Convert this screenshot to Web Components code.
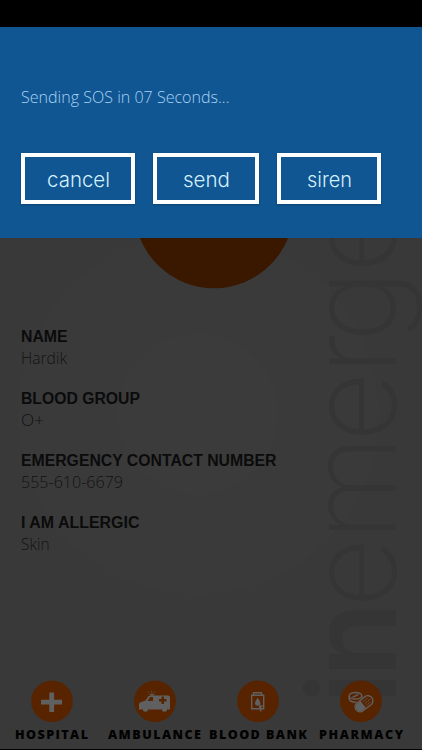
<!DOCTYPE html>
<html lang="en">
<head>
<meta charset="utf-8">
<title>In Emergency</title>
<style>
    html, body { margin: 0; background: #000; }
    body { width: 422px; height: 750px; overflow: hidden; font-family: "Open Sans", "Noto Sans", sans-serif; }
</style>
</head>
<body>
<emergency-app></emergency-app>
<script>
class FitText extends HTMLElement {
    connectedCallback() {
        const w = this.getAttribute('w');
        const h = this.getAttribute('h') || 24;
        const base = this.getAttribute('base') || 18;
        const adjust = this.hasAttribute('spaced') ? 'spacing' : 'spacingAndGlyphs';
        this.attachShadow({ mode: 'open' }).innerHTML = `
            <style>
                :host { display: block; width: ${w}px; height: ${h}px; }
                svg { display: block; overflow: visible; }
                text { fill: currentColor; }
            </style>
            <svg width="${w}" height="${h}"><text x="0" y="${base}" textLength="${w}" lengthAdjust="${adjust}">${this.textContent}</text></svg>`;
    }
}
customElements.define('fit-text', FitText);

class SosButton extends HTMLElement {
    connectedCallback() {
        this.attachShadow({ mode: 'open' }).innerHTML = `
            <style>
                :host { display: flex; box-sizing: border-box; width: ${this.getAttribute('width')}px; height: 51px; border: 4px solid #fff; align-items: center; justify-content: center; color: #d5f0ff; box-shadow: 0 1px 2px rgba(0,0,0,0.25); font: 300 20.5px Inter, "Liberation Sans", sans-serif; cursor: pointer; }
            </style>
            <slot></slot>`;
    }
}
customElements.define('sos-button', SosButton);

class SosPanel extends HTMLElement {
    connectedCallback() {
        this.attachShadow({ mode: 'open' }).innerHTML = `
            <style>
                :host { display: block; position: absolute; left: 0; top: 27px; width: 422px; height: 211px; box-sizing: border-box; padding: 58px 21px 0 21px; background: #105692; }
                .message { height: 68px; color: #a9d2f3; font: 300 17px "Open Sans", "Noto Sans", sans-serif; }
                .buttons { display: flex; gap: 18px; }
            </style>
            <div class="message"><fit-text w="208.5" h="26" base="18">Sending SOS in 07 Seconds...</fit-text></div>
            <div class="buttons">
                <sos-button width="114"><fit-text w="63" h="26" base="20.5">cancel</fit-text></sos-button>
                <sos-button width="106"><fit-text w="47" h="26" base="20.5">send</fit-text></sos-button>
                <sos-button width="104"><fit-text w="45" h="26" base="20.5">siren</fit-text></sos-button>
            </div>`;
    }
}
customElements.define('sos-panel', SosPanel);

class ProfileField extends HTMLElement {
    connectedCallback() {
        this.attachShadow({ mode: 'open' }).innerHTML = `
            <style>
                :host { display: block; height: 62px; }
                .label { color: #0b0b0b; font: bold 16px "Liberation Sans", Arial, sans-serif; }
                .value { color: #121212; font: 300 16.5px "Open Sans", "Noto Sans", sans-serif; }
            </style>
            <div class="label"><fit-text w="${this.getAttribute('lw')}" h="22" base="15">${this.getAttribute('label')}</fit-text></div>
            <div class="value"><fit-text w="${this.getAttribute('vw')}" h="22" base="15">${this.getAttribute('value')}</fit-text></div>`;
    }
}
customElements.define('profile-field', ProfileField);

// 42x42 icons, drawn over the orange disc
const icons = {
    hospital: `<path d="M18.300 12.500h4.800v7.300h8v4.600h-8v7.600h-4.800v-7.600H10v-4.600h8.300z"/>`,
    ambulance: `<path fill-rule="evenodd" d="M18 15.500h16q2 0 2 2v12h-2a4 4 0 0 0-7 0H15a4 4 0 0 0-7 0H5v-5.500l1-1.500 5.500-2 3-4.500zM16 17l-2.500 4H19v-4zM27.500 16.500v2.500H25v2.500h2.500V24H30v-2.500h2.500V19H30v-2.500z"/>
        <circle cx="11.500" cy="29" r="2.800"/><circle cx="30.500" cy="29" r="2.800"/>
        <path d="M16 14.200h4v1h-4zM14 11.500l1.200 1.500M17.800 10.500v2.500M21.300 11.500l-1 1.500" stroke="#606060" stroke-width=".6"/>`,
    blood: `<g fill="none" stroke="#606060" stroke-width="1.400"><path d="M16.500 15v-2.200h8V15M14.700 15.200h12v13.600h-12zM22.700 29.500v-3.500h3"/><path d="M23.700 27v4.500"/></g>
        <path d="M20.700 17.800q-2.700 3.800-2.700 5.300a2.700 2.700 0 0 0 5.400 0q0-1.500-2.700-5.300z"/>`,
    pharmacy: `<g fill="none" stroke="#606060" stroke-width="1.400"><ellipse cx="15.500" cy="15.800" rx="6.300" ry="3.300"/><path d="M9.200 16v3q1 3.300 7 3.300M21.800 16v2M12.500 17.300l6-3"/></g>
        <g transform="rotate(-38 24 23.800)"><rect x="14" y="18.800" width="20" height="10" rx="5" fill="#582400" stroke="#606060" stroke-width="1.300"/>
        <path d="M23 19.500h-4a4.300 4.300 0 0 0 0 8.600h4z"/><path d="M25 21.500h5.500M25 24h7M25 26.500h5.500" stroke="#606060" stroke-width="1" stroke-dasharray="1 1"/></g>`
};

class NavItem extends HTMLElement {
    connectedCallback() {
        const icon = this.getAttribute('icon');
        this.attachShadow({ mode: 'open' }).innerHTML = `
            <style>
                :host { display: flex; flex-direction: column; align-items: center; width: 103px; color: #020202; font: 800 12.600px "Open Sans", "Noto Sans", sans-serif; }
                svg { display: block; fill: #606060; margin-bottom: 3px; }
            </style>
            <svg width="42" height="42" viewBox="0 0 42 42"><circle cx="21" cy="21.300" r="20.900" fill="#582400"/>${icons[icon]}</svg>
            <fit-text spaced w="${this.getAttribute('lw')}" h="20" base="14">${this.textContent}</fit-text>`;
    }
}
customElements.define('nav-item', NavItem);

class EmergencyApp extends HTMLElement {
    connectedCallback() {
        this.attachShadow({ mode: 'open' }).innerHTML = `
            <style>
                :host { display: flex; flex-direction: column; position: relative; box-sizing: border-box; width: 422px; height: 749px; padding-top: 327px; overflow: hidden; background: #393939; }
                .backdrop { position: absolute; left: 0; top: 0; }
                .fields { position: relative; padding-left: 21px; height: 353px; }
                nav { position: relative; display: flex; }
                .bar { position: absolute; left: 0; top: 0; width: 422px; height: 27px; background: #000; }
            </style>
            <svg class="backdrop" width="422" height="749">
                <circle cx="198" cy="414" r="181" fill="#3a3a3a"/>
                <circle cx="198" cy="414" r="81" fill="#3b3b3b"/>
                <circle cx="214" cy="208.500" r="79.700" fill="#3a1800"/>
                <g transform="translate(396 699) rotate(-90)" fill="#353535" font-family="Inter" font-size="122">
                    <text x="-5 22" y="0" font-weight="600">in</text>
                    <text x="91 158 257 324 357 426" y="0" font-weight="250">emerge</text>
                </g>
            </svg>
            <div class="fields">
                <profile-field label="NAME" value="Hardik" lw="46.5" vw="46"></profile-field>
                <profile-field label="BLOOD GROUP" value="O+" lw="119" vw="23"></profile-field>
                <profile-field label="EMERGENCY CONTACT NUMBER" value="555-610-6679" lw="255.5" vw="102"></profile-field>
                <profile-field label="I AM ALLERGIC" value="Skin" lw="118.5" vw="28.5"></profile-field>
            </div>
            <nav>
                <nav-item icon="hospital" lw="73">HOSPITAL</nav-item>
                <nav-item icon="ambulance" lw="93">AMBULANCE</nav-item>
                <nav-item icon="blood" lw="98">BLOOD BANK</nav-item>
                <nav-item icon="pharmacy" lw="84">PHARMACY</nav-item>
            </nav>
            <div class="bar"></div>
            <sos-panel></sos-panel>`;
    }
}
customElements.define('emergency-app', EmergencyApp);
</script>
</body>
</html>
